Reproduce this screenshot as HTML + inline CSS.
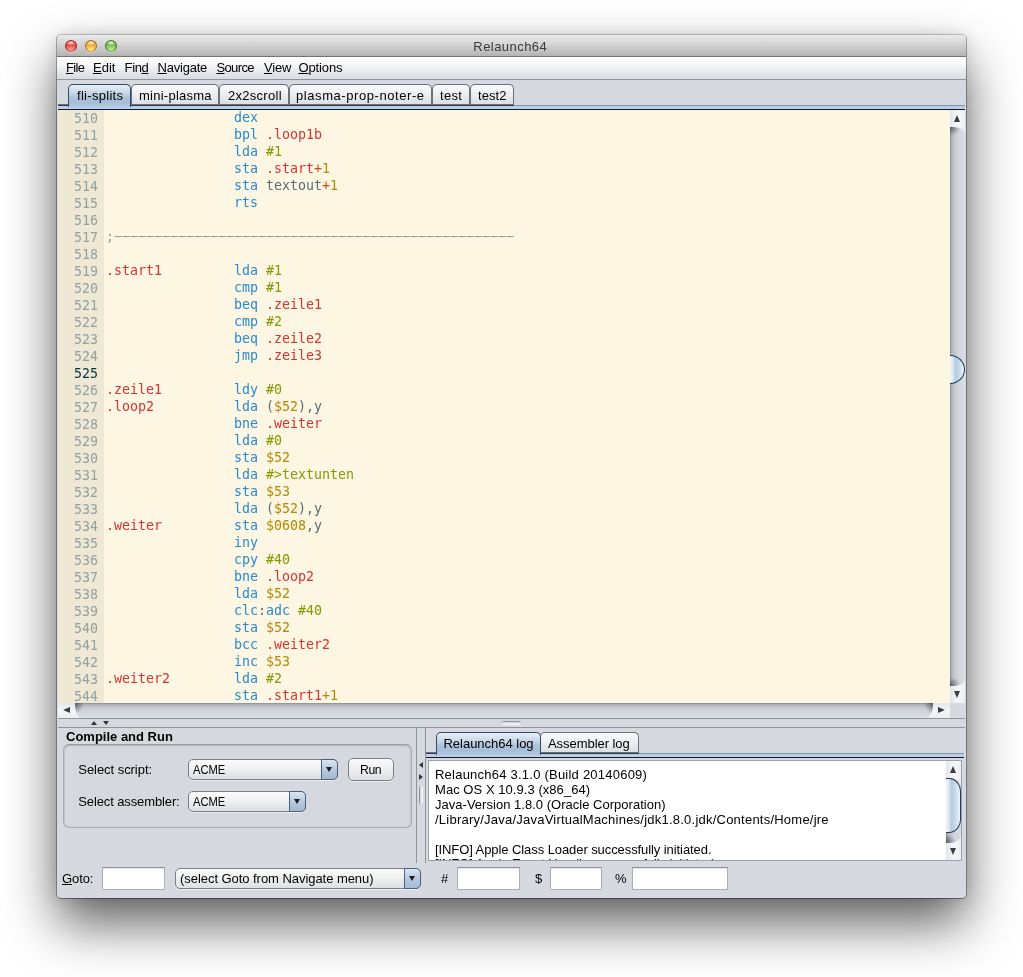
<!DOCTYPE html>
<html lang="en">
<head>
<meta charset="utf-8">
<title>Relaunch64</title>
<style>
html,body{margin:0;padding:0;background:#fff;}
body{width:1023px;height:977px;position:relative;overflow:hidden;
  font-family:"Liberation Sans",sans-serif;font-size:13px;color:#000;}
.abs{position:absolute;}
#win{position:absolute;left:57px;top:35px;width:909px;height:863px;background:#d6d9df;
  border-radius:4px 4px 4px 4px;
  box-shadow:0 26px 52px rgba(0,0,0,.62),0 0 16px rgba(0,0,0,.12);}
#win:before{content:"";position:absolute;left:-1px;top:-1px;right:-1px;bottom:-1px;border:1px solid;border-color:rgba(0,0,0,.20) rgba(0,0,0,.30) rgba(0,0,0,.42);border-radius:5px 5px 5px 5px;}
#winclip{position:absolute;left:0;top:0;width:909px;height:863px;border-radius:4px 4px 4px 4px;overflow:hidden;}
/* everything inside #winclip is positioned in page coords via offset wrapper */
#pg{position:absolute;left:-57px;top:-35px;width:1023px;height:977px;will-change:transform;}
#title{left:57px;top:35px;width:909px;height:22px;
  background:linear-gradient(#f0f0f0 0,#e7e7e7 1px,#d8d8d8 35%,#b4b4b4 21px,#747474 21px,#747474 22px);}
.tl{position:absolute;top:5px;width:12px;height:12px;border-radius:50%;box-sizing:border-box;}
#menubar{left:57px;top:57px;width:909px;height:22px;
  background:linear-gradient(#ffffff 0%,#f7f8fa 30%,#e7e9ee 65%,#d9dce3 100%);border-bottom:1px solid #90949d;}
.mi{position:absolute;top:60px;white-space:nowrap;line-height:15px;}
.mi u,.lbl u{text-decoration:underline;text-underline-offset:1px;text-decoration-thickness:1px;}
.lbl{position:absolute;white-space:nowrap;letter-spacing:.2px;line-height:15px;}
/* tabs */
.tab{position:absolute;box-sizing:border-box;height:22px;border:1px solid #6c7079;border-bottom:none;
  border-radius:5px 5px 0 0;background:linear-gradient(#fbfbfc 0%,#eceef2 45%,#d9dce2 100%);}
.tab.sel{z-index:2;border-color:#2f4a66;background:linear-gradient(#e9eff6 0%,#c9d8e7 35%,#a9c0d8 62%,#a6bed7 80%,#b2c9e1 100%);}
.tab span{position:absolute;top:3px;white-space:nowrap;letter-spacing:.2px;line-height:15px;}
.tabline{position:absolute;height:2px;margin-top:-1px;background:linear-gradient(#7d828b,#252a33);z-index:1;}
.tabband{position:absolute;height:4px;background:linear-gradient(#8496ab 0,#8496ab 1px,#b4cbe3 1px,#bdd3ea 4px);}
.tabdark{position:absolute;height:1px;background:#10182a;}
/* editor */
#editor{left:58px;top:110px;width:892px;height:593px;background:#fdf6e3;overflow:hidden;
  font-family:"DejaVu Sans Mono","Liberation Mono",monospace;font-size:13.29px;line-height:17px;}
#gutter{position:absolute;left:0;top:0px;width:46px;height:600px;background:#eee8d5;color:#93a1a1;}
#gutter div{width:24px;text-align:right;height:17px;margin-left:16px;}
#gutter .cur{color:#073642;}
#code{position:absolute;left:48px;top:-1px;color:#586e75;}
#code div{height:17px;white-space:pre;}
.m{color:#268bd2}.l{color:#dc322f}.n{color:#859900}.y{color:#b58900}.o{color:#cb4b16}.t{color:#586e75}.c{color:#93a1a1}
.c b{font-weight:normal;background:repeating-linear-gradient(90deg,rgba(147,161,161,.3) 0,rgba(147,161,161,.3) 1px,#93a1a1 1px,#93a1a1 8px) 0 7px/100% 1px no-repeat}

/* scrollbars */
.sbtn{position:absolute;background:linear-gradient(#eef0f3,#fafbfc 50%,#e9ebef);}
.vtrack{position:absolute;background:radial-gradient(ellipse 11px 9px at 0 100%,rgba(40,43,50,.62),rgba(40,43,50,.28) 55%,rgba(40,43,50,0) 100%),radial-gradient(ellipse 11px 9px at 0 0,rgba(40,43,50,.62),rgba(40,43,50,.28) 55%,rgba(40,43,50,0) 100%),linear-gradient(90deg,#868a93 0%,#abafb7 10%,#c3c6cd 26%,#d1d4da 52%,#d9dce2 100%);}
.htrack{position:absolute;background:radial-gradient(ellipse 9px 11px at 0 0,rgba(40,43,50,.62),rgba(40,43,50,.28) 55%,rgba(40,43,50,0) 100%),radial-gradient(ellipse 9px 11px at 100% 0,rgba(40,43,50,.62),rgba(40,43,50,.28) 55%,rgba(40,43,50,0) 100%),linear-gradient(180deg,#868a93 0%,#abafb7 10%,#c3c6cd 26%,#d1d4da 52%,#d9dce2 100%);}
.arr{position:absolute;width:0;height:0;border-style:solid;border-color:transparent;}
.hline{position:absolute;height:1px;background:#8f939c;}
.vline{position:absolute;width:1px;background:#8f939c;}
.thumb{position:absolute;box-sizing:border-box;border:1px solid #1f3a57;}
/* nimbus widgets */
.combo{position:absolute;box-sizing:border-box;border:1px solid #7b7f88;border-radius:5px;
  background:linear-gradient(#fbfbfc 0%,#eff0f3 45%,#dcdfe5 100%);box-shadow:0 1px 0 rgba(255,255,255,.55);}
.combo .btn{position:absolute;right:-1px;top:-1px;bottom:-1px;width:15px;border:1px solid #4a627c;border-radius:0 5px 5px 0;
  background:linear-gradient(#dbe6f1 0%,#b9cce0 45%,#a3bad3 100%);}
.combo .btn i{position:absolute;left:3.8px;top:7.4px;width:0;height:0;border-style:solid;border-color:#1c1e22 transparent transparent;border-width:5px 3.6px 0 3.6px;}
.combo span{position:absolute;left:4px;top:2px;white-space:nowrap;letter-spacing:.2px;line-height:15px;}
.field{position:absolute;box-sizing:border-box;background:#fff;border:1px solid #adafb5;border-top-color:#8e9097;box-shadow:inset 0 1px 1px rgba(0,0,0,.10);}
.panelbox{position:absolute;box-sizing:border-box;border-radius:6px;background:#d5d8de;
  border:1px solid #a9acb4;border-top-color:#989ba3;box-shadow:inset 0 1px 2px rgba(0,0,0,.16),inset 1px 0 1px rgba(0,0,0,.05),inset -1px 0 1px rgba(0,0,0,.05);}
</style>
</head>
<body>
<div id="win"><div id="winclip"><div id="pg">

<div id="title" class="abs">
  <div class="tl" style="left:8px;background:radial-gradient(ellipse 60% 28% at 50% 17%,rgba(255,235,230,.95),rgba(255,235,230,0) 100%),radial-gradient(ellipse 75% 60% at 50% 100%,#ffb0a6 0%,rgba(255,150,140,.6) 50%,rgba(255,140,130,0) 100%),linear-gradient(#c8282c,#ee4f4a 55%,#f2605a);border:1px solid #9e2527;border-bottom-color:#c45a55;box-shadow:0 1px 0 rgba(255,255,255,.45);"></div>
  <div class="tl" style="left:28px;background:radial-gradient(ellipse 60% 28% at 50% 17%,rgba(255,250,225,.95),rgba(255,250,225,0) 100%),radial-gradient(ellipse 75% 60% at 50% 100%,#ffeaa0 0%,rgba(255,225,130,.6) 50%,rgba(255,220,120,0) 100%),linear-gradient(#d98a1c,#f3b13c 55%,#f6c04a);border:1px solid #a06a18;border-bottom-color:#c59a4a;box-shadow:0 1px 0 rgba(255,255,255,.45);"></div>
  <div class="tl" style="left:48px;background:radial-gradient(ellipse 60% 28% at 50% 17%,rgba(240,255,225,.95),rgba(240,255,225,0) 100%),radial-gradient(ellipse 75% 60% at 50% 100%,#cdf0ae 0%,rgba(180,230,140,.6) 50%,rgba(170,225,130,0) 100%),linear-gradient(#4f9a32,#7cc455 55%,#8bcf63);border:1px solid #3f7a2a;border-bottom-color:#6fa556;box-shadow:0 1px 0 rgba(255,255,255,.45);"></div>
</div>
<div class="lbl" style="left:473.3px;top:39px;color:#3a3a3a;letter-spacing:.45px;">Relaunch64</div>

<div id="menubar" class="abs"></div>
<div class="mi" style="left:66px;letter-spacing:-.65px"><u>F</u>ile</div>
<div class="mi" style="left:93px;letter-spacing:0"><u>E</u>dit</div>
<div class="mi" style="left:124.6px;letter-spacing:-.37px">Fin<u>d</u></div>
<div class="mi" style="left:157.5px;letter-spacing:-.22px"><u>N</u>avigate</div>
<div class="mi" style="left:216.5px;letter-spacing:-.64px"><u>S</u>ource</div>
<div class="mi" style="left:264px;letter-spacing:-.18px"><u>V</u>iew</div>
<div class="mi" style="left:298.5px;letter-spacing:-.14px"><u>O</u>ptions</div>

<!-- editor tabs -->
<div class="tabline" style="left:58px;top:105px;width:456px;"></div>
<div class="tabband" style="left:58px;top:105px;width:907px;"></div>
<div class="tabdark" style="left:58px;top:109px;width:907px;"></div>
<div class="tab sel" style="left:68px;top:84px;width:63px;height:23px;"><span style="left:8px;letter-spacing:.3px">fli-splits</span></div>
<div class="tab" style="left:131px;top:84px;width:88px;"><span style="left:7px;letter-spacing:.25px">mini-plasma</span></div>
<div class="tab" style="left:219px;top:84px;width:70px;"><span style="left:8px;letter-spacing:.28px">2x2scroll</span></div>
<div class="tab" style="left:289px;top:84px;width:143px;"><span style="left:6px;letter-spacing:.57px">plasma-prop-noter-e</span></div>
<div class="tab" style="left:432px;top:84px;width:38px;"><span style="left:7px;letter-spacing:.3px">test</span></div>
<div class="tab" style="left:470px;top:84px;width:44px;"><span style="left:7px;letter-spacing:.08px">test2</span></div>

<div id="editor" class="abs">
<div id="gutter">
<div>510</div>
<div>511</div>
<div>512</div>
<div>513</div>
<div>514</div>
<div>515</div>
<div>516</div>
<div>517</div>
<div>518</div>
<div>519</div>
<div>520</div>
<div>521</div>
<div>522</div>
<div>523</div>
<div>524</div>
<div class="cur">525</div>
<div>526</div>
<div>527</div>
<div>528</div>
<div>529</div>
<div>530</div>
<div>531</div>
<div>532</div>
<div>533</div>
<div>534</div>
<div>535</div>
<div>536</div>
<div>537</div>
<div>538</div>
<div>539</div>
<div>540</div>
<div>541</div>
<div>542</div>
<div>543</div>
<div>544</div>
</div>
<div id="code">
<div>                <span class="m">dex</span></div>
<div>                <span class="m">bpl</span> <span class="l">.loop1b</span></div>
<div>                <span class="m">lda</span> <span class="n">#1</span></div>
<div>                <span class="m">sta</span> <span class="l">.start</span><span class="o">+</span><span class="y">1</span></div>
<div>                <span class="m">sta</span> <span class="t">textout</span><span class="o">+</span><span class="y">1</span></div>
<div>                <span class="m">rts</span></div>
<div>&nbsp;</div>
<div><span class="c">;<b>--------------------------------------------------</b></span></div>
<div>&nbsp;</div>
<div><span class="l">.start1</span>         <span class="m">lda</span> <span class="n">#1</span></div>
<div>                <span class="m">cmp</span> <span class="n">#1</span></div>
<div>                <span class="m">beq</span> <span class="l">.zeile1</span></div>
<div>                <span class="m">cmp</span> <span class="n">#2</span></div>
<div>                <span class="m">beq</span> <span class="l">.zeile2</span></div>
<div>                <span class="m">jmp</span> <span class="l">.zeile3</span></div>
<div>&nbsp;</div>
<div><span class="l">.zeile1</span>         <span class="m">ldy</span> <span class="n">#0</span></div>
<div><span class="l">.loop2</span>          <span class="m">lda</span> <span class="t">(</span><span class="y">$52</span><span class="t">),y</span></div>
<div>                <span class="m">bne</span> <span class="l">.weiter</span></div>
<div>                <span class="m">lda</span> <span class="n">#0</span></div>
<div>                <span class="m">sta</span> <span class="y">$52</span></div>
<div>                <span class="m">lda</span> <span class="n">#&gt;textunten</span></div>
<div>                <span class="m">sta</span> <span class="y">$53</span></div>
<div>                <span class="m">lda</span> <span class="t">(</span><span class="y">$52</span><span class="t">),y</span></div>
<div><span class="l">.weiter</span>         <span class="m">sta</span> <span class="y">$0608</span><span class="t">,y</span></div>
<div>                <span class="m">iny</span></div>
<div>                <span class="m">cpy</span> <span class="n">#40</span></div>
<div>                <span class="m">bne</span> <span class="l">.loop2</span></div>
<div>                <span class="m">lda</span> <span class="y">$52</span></div>
<div>                <span class="m">clc</span><span class="t">:</span><span class="m">adc</span> <span class="n">#40</span></div>
<div>                <span class="m">sta</span> <span class="y">$52</span></div>
<div>                <span class="m">bcc</span> <span class="l">.weiter2</span></div>
<div>                <span class="m">inc</span> <span class="y">$53</span></div>
<div><span class="l">.weiter2</span>        <span class="m">lda</span> <span class="n">#2</span></div>
<div>                <span class="m">sta</span> <span class="l">.start1</span><span class="y">+1</span></div>
</div>
</div>


<!-- vertical scrollbar of editor -->
<div class="sbtn" style="left:950px;top:110px;width:15px;height:593px;background:linear-gradient(90deg,#e4e6ea,#f6f7f9 50%,#eceef1);"></div>
<div class="vtrack" style="left:950px;top:127px;width:15px;height:559px;border-radius:0 12px 12px 0 / 0 8px 8px 0;"></div>
<div class="arr" style="left:954.3px;top:115px;border-width:0 3.5px 7px 3.5px;border-bottom-color:#3a3d42;"></div>
<div class="arr" style="left:954.3px;top:691px;border-width:7px 3.5px 0 3.5px;border-top-color:#3a3d42;"></div>
<div class="thumb" style="left:950px;top:355px;width:15px;height:29px;border-radius:0 15px 15px 0 / 0 14.5px 14.5px 0;border-left:none;background:linear-gradient(90deg,#f2f5f9 0%,#e1e9f2 18%,#b6cbe0 40%,#cfe0ee 75%,#eef6fb 100%);"></div>
<!-- horizontal scrollbar of editor -->
<div class="sbtn" style="left:58px;top:703px;width:892px;height:15px;background:linear-gradient(#e4e6ea,#f6f7f9 50%,#eceef1);"></div>
<div class="htrack" style="left:75px;top:703px;width:858px;height:15px;border-radius:0 0 8px 8px / 0 0 12px 12px;"></div>
<div class="arr" style="left:63px;top:707px;border-width:3.6px 7px 3.6px 0;border-right-color:#3a3d42;"></div>
<div class="arr" style="left:938px;top:707px;border-width:3.6px 0 3.6px 7px;border-left-color:#3a3d42;"></div>
<div class="abs" style="left:950px;top:703px;width:15px;height:15px;background:#d6d9df;"></div>
<!-- horizontal split divider -->
<div class="hline" style="left:58px;top:718px;width:907px;"></div>
<div class="hline" style="left:58px;top:727px;width:907px;"></div>
<div class="arr" style="left:91px;top:721px;border-width:0 3px 4px 3px;border-bottom-color:#33363b;"></div>
<div class="arr" style="left:103px;top:721px;border-width:4px 3px 0 3px;border-top-color:#33363b;"></div>
<div class="abs" style="left:502px;top:721px;width:19px;height:4px;box-sizing:border-box;border-radius:2px;border-top:1px solid #8f939c;background:linear-gradient(#d0d3d9,#fff);"></div>



<!-- compile and run panel -->
<div class="lbl" style="left:66px;top:729px;font-weight:bold;letter-spacing:0;">Compile and Run</div>
<div class="panelbox" style="left:63px;top:744px;width:349px;height:84px;"></div>
<div class="lbl" style="left:78.3px;top:762px;letter-spacing:-.05px">Select script:</div>
<div class="lbl" style="left:78.3px;top:794px;letter-spacing:-.12px">Select assembler:</div>
<div class="combo" style="left:188px;top:759px;width:150px;height:21px;"><span style="transform:scaleX(.86);transform-origin:0 0;letter-spacing:0">ACME</span><div class="btn"><i></i></div></div>
<div class="combo" style="left:188px;top:791px;width:118px;height:21px;"><span style="transform:scaleX(.86);transform-origin:0 0;letter-spacing:0">ACME</span><div class="btn"><i></i></div></div>
<div class="combo" style="left:348px;top:758px;width:46px;height:23px;border-radius:5px;"><span style="left:10.5px;top:3px;letter-spacing:-.45px;transform:scaleX(.94);transform-origin:0 0">Run</span></div>
<!-- vertical split divider -->
<div class="vline" style="left:416px;top:728px;height:135px;"></div>
<div class="vline" style="left:425px;top:728px;height:135px;"></div>
<div class="arr" style="left:419px;top:762px;border-width:3px 4px 3px 0;border-right-color:#33363b;"></div>
<div class="arr" style="left:419px;top:774px;border-width:3px 0 3px 4px;border-left-color:#33363b;"></div>
<div class="abs" style="left:419px;top:786px;width:4px;height:18px;box-sizing:border-box;border-radius:2px;border-left:1px solid #8f939c;background:linear-gradient(90deg,#d0d3d9,#fff);"></div>
<!-- log tabs -->
<div class="tabline" style="left:426px;top:753px;width:213px;"></div>
<div class="tabband" style="left:426px;top:753px;width:538px;"></div>
<div class="tabdark" style="left:426px;top:757px;width:538px;"></div>
<div class="tab sel" style="left:436px;top:732px;width:105px;height:23px;"><span style="left:6.5px;letter-spacing:-.02px">Relaunch64 log</span></div>
<div class="tab" style="left:540px;top:732px;width:99px;"><span style="left:7px;letter-spacing:-.05px">Assembler log</span></div>
<!-- log text area -->
<div class="abs" style="left:428px;top:760px;width:534px;height:101px;box-sizing:border-box;border:1px solid #9da1aa;background:#fff;overflow:hidden;">
  <div style="position:absolute;left:6px;top:6px;line-height:15px;white-space:nowrap;">
<div style="letter-spacing:.23px">Relaunch64 3.1.0 (Build 20140609)</div>
<div style="letter-spacing:.05px">Mac OS X 10.9.3 (x86_64)</div>
<div style="letter-spacing:.02px">Java-Version 1.8.0 (Oracle Corporation)</div>
<div style="letter-spacing:.23px">/Library/Java/JavaVirtualMachines/jdk1.8.0.jdk/Contents/Home/jre</div>
<div>&nbsp;</div>
<div style="letter-spacing:-.08px">[INFO] Apple Class Loader successfully initiated.</div>
<div style="letter-spacing:-.08px;margin-top:-1px">[INFO] Apple Event Handler successfully initiated.</div>
</div>
</div>
<!-- log scrollbar -->
<div class="sbtn" style="left:946px;top:761px;width:15px;height:99px;background:linear-gradient(90deg,#e4e6ea,#f6f7f9 50%,#eceef1);"></div>
<div class="vtrack" style="left:946px;top:778px;width:15px;height:65px;border-radius:0 12px 12px 0 / 0 8px 8px 0;"></div>
<div class="arr" style="left:950px;top:766px;border-width:0 3.5px 7px 3.5px;border-bottom-color:#3a3d42;"></div>
<div class="arr" style="left:950px;top:848px;border-width:7px 3.5px 0 3.5px;border-top-color:#3a3d42;"></div>
<div class="thumb" style="left:946px;top:778px;width:15px;height:55px;border-radius:0 12px 12px 0 / 0 14px 14px 0;border-left:none;background:linear-gradient(90deg,#f2f5f9 0%,#e1e9f2 18%,#b6cbe0 40%,#cfe0ee 75%,#eef6fb 100%);"></div>
<!-- bottom row -->
<div class="lbl" style="left:62px;top:871px;letter-spacing:-.1px"><u>G</u>oto:</div>
<div class="field" style="left:102px;top:867px;width:63px;height:23px;"></div>
<div class="combo" style="left:175px;top:868px;width:246px;height:21px;"><span style="letter-spacing:-.05px">(select Goto from Navigate menu)</span><div class="btn"><i></i></div></div>
<div class="lbl" style="left:441px;top:871px;">#</div>
<div class="field" style="left:457px;top:867px;width:63px;height:23px;"></div>
<div class="lbl" style="left:535px;top:871px;">$</div>
<div class="field" style="left:550px;top:867px;width:52px;height:23px;"></div>
<div class="lbl" style="left:615px;top:871px;">%</div>
<div class="field" style="left:632px;top:867px;width:96px;height:23px;"></div>


</div></div></div>
</body>
</html>
